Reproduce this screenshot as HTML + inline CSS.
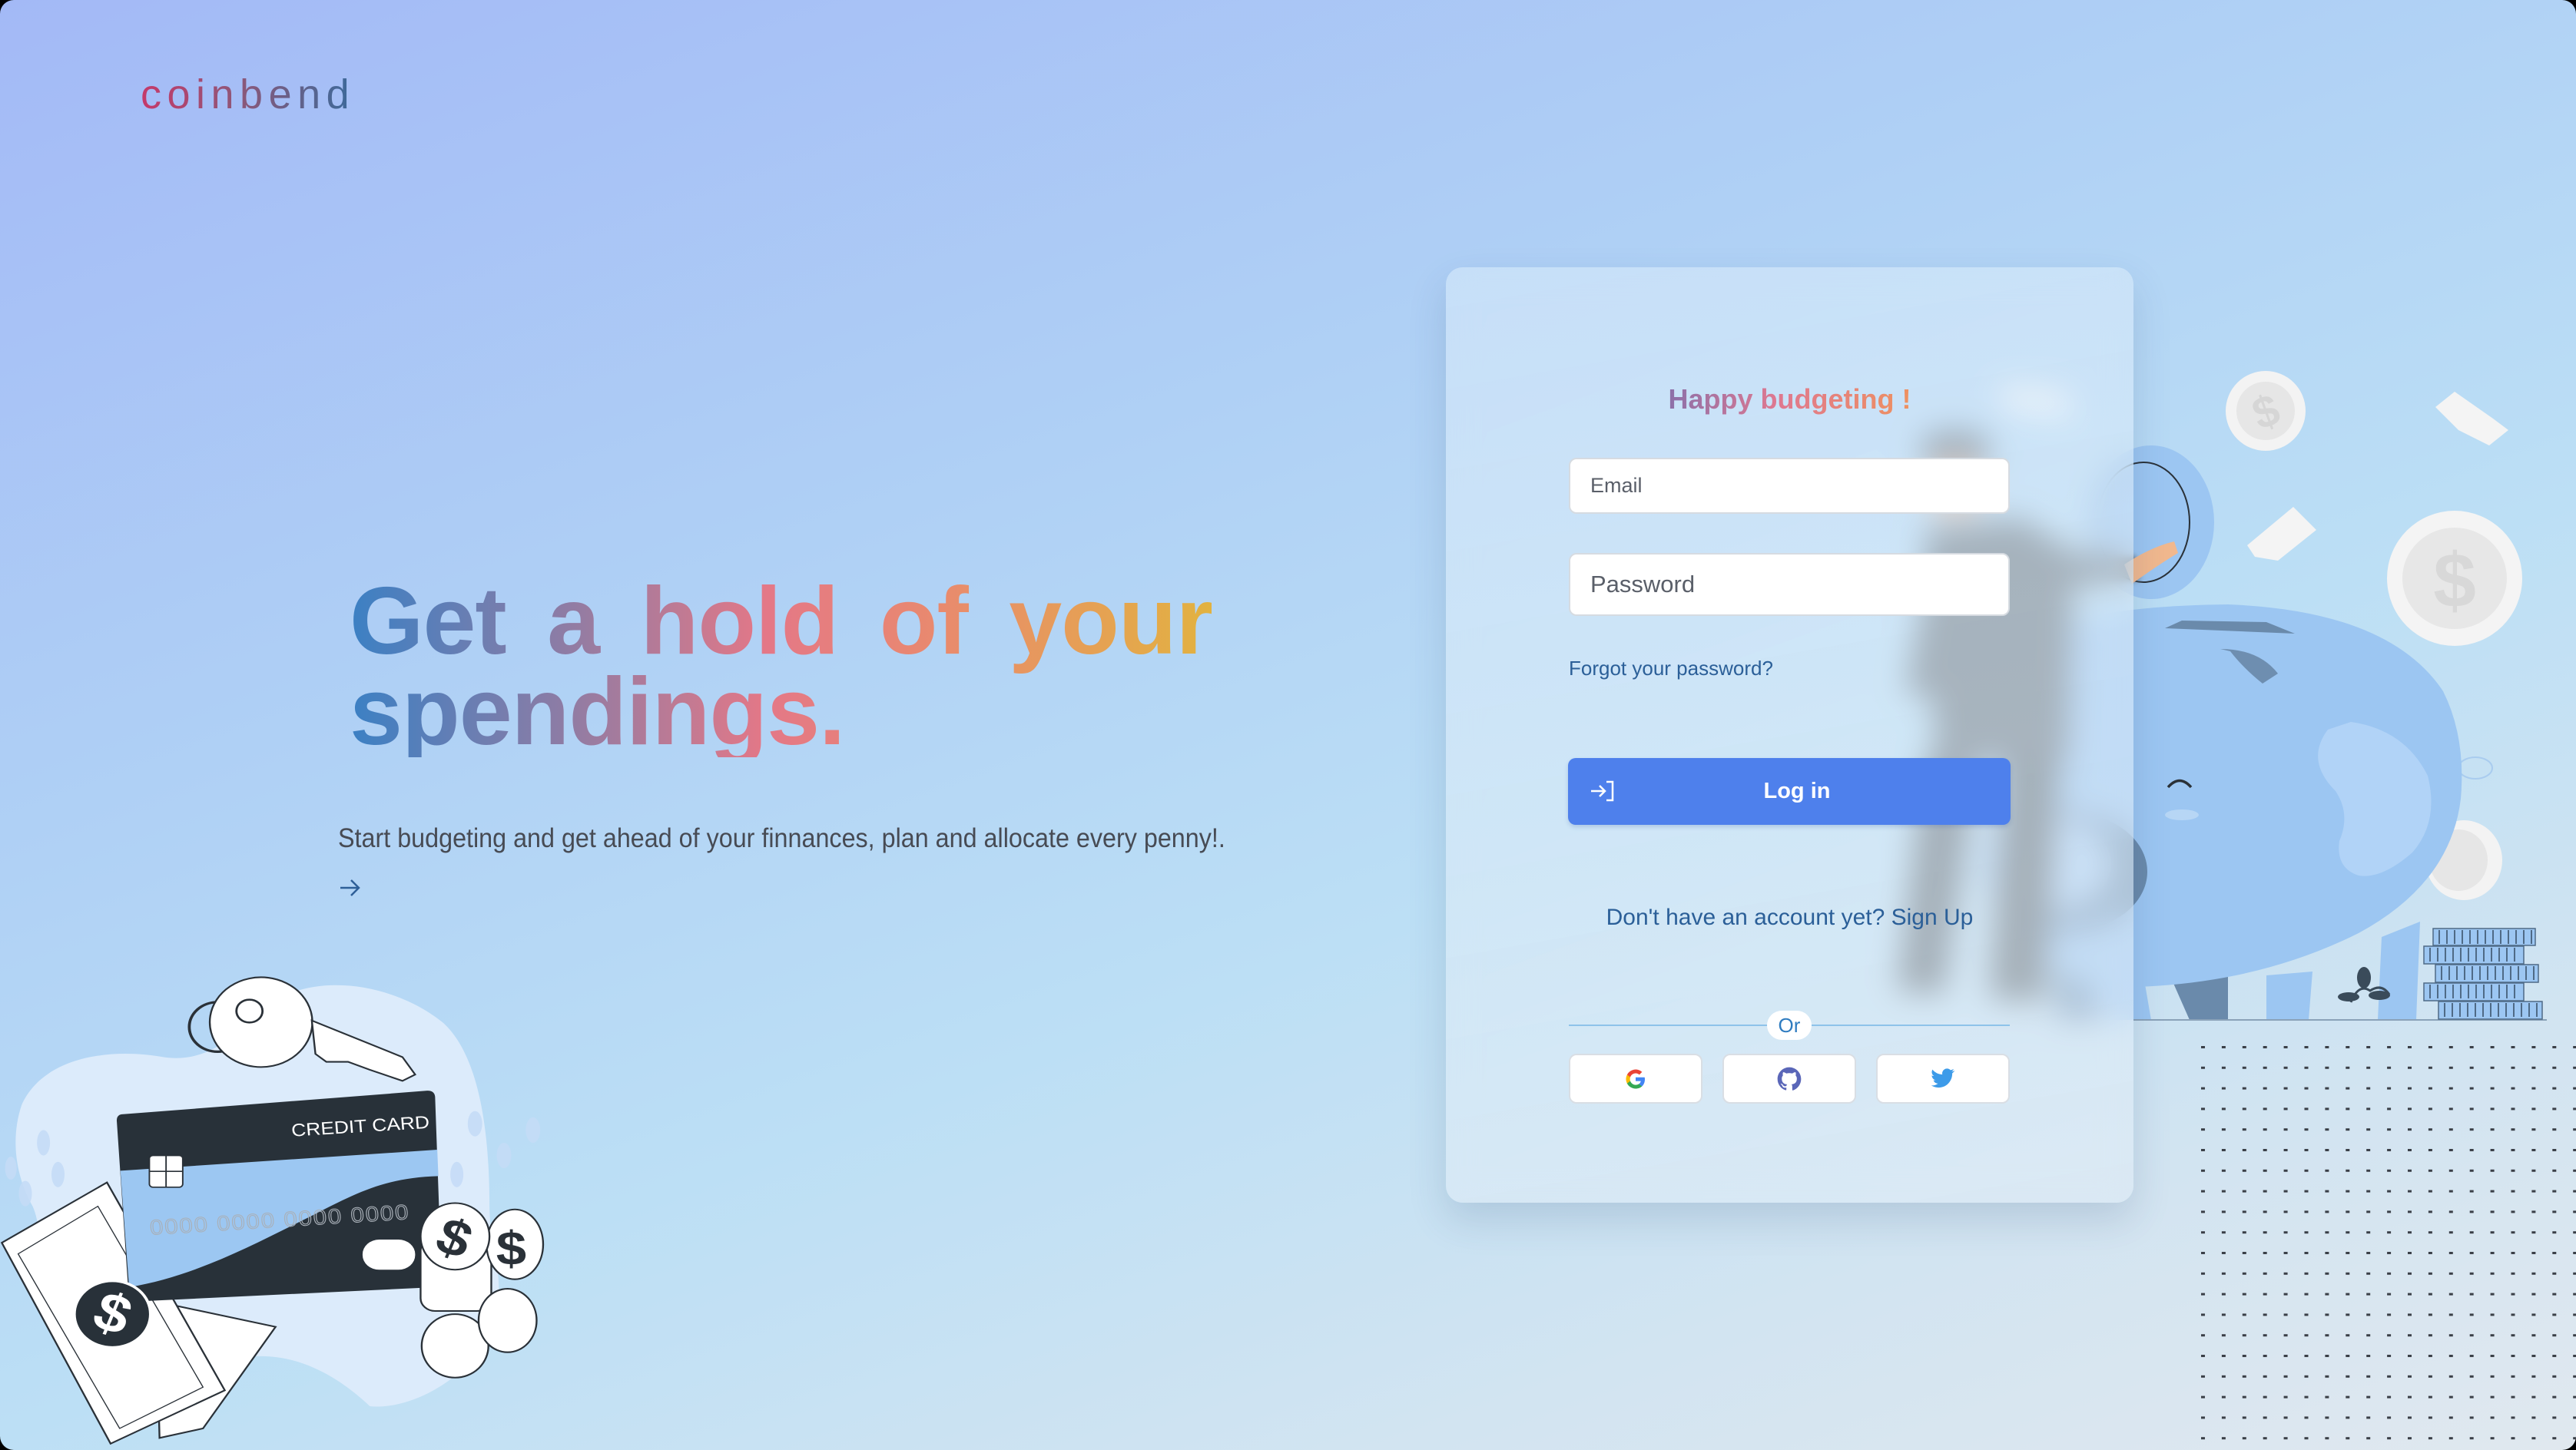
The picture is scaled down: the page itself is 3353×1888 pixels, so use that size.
<!DOCTYPE html>
<html><head><meta charset="utf-8">
<style>
html,body{margin:0;padding:0;background:#000;}
#root{position:relative;width:3353px;height:1888px;overflow:hidden;border-radius:18px;
background:linear-gradient(160deg,#a3b9f6 0%,#afd0f5 35%,#bcdff5 60%,#d2e4f1 82%,#e0e8ef 100%);
font-family:"Liberation Sans",sans-serif;}
.abs{position:absolute;}
.logo{left:183px;top:88px;font-size:54px;letter-spacing:7.5px;line-height:70px;
background:linear-gradient(90deg,#c5396a 0%,#8e5778 45%,#3a6a9b 100%);-webkit-background-clip:text;background-clip:text;color:transparent;}
.head{left:455px;top:750px;width:1130px;font-size:124px;line-height:118px;font-weight:bold;word-spacing:20px;letter-spacing:-1px;white-space:nowrap;
background:linear-gradient(90deg,#3b80c4 0%,#8f7ca4 25%,#e47887 48%,#e98a6e 68%,#e2b33f 100%);-webkit-background-clip:text;background-clip:text;color:transparent;}
.sub{left:440px;top:1074px;font-size:35px;line-height:35px;color:#474b54;white-space:nowrap;transform:scaleX(.923);transform-origin:0 0;}
.card{left:1882px;top:348px;width:895px;height:1218px;border-radius:22px;background:linear-gradient(170deg,rgba(218,236,250,.55),rgba(224,236,246,.6));
-webkit-backdrop-filter:blur(20px);backdrop-filter:blur(20px);box-shadow:0 22px 50px rgba(40,70,110,.16);}
.in{position:absolute;left:2042px;width:574px;background:#fff;border:2px solid #d6dbe1;border-radius:10px;box-sizing:border-box;color:#5a5f69;}
.btn{position:absolute;top:1372px;height:65px;width:174px;background:#fff;border:2px solid #d9dee4;border-radius:10px;box-sizing:border-box;}
.btn svg{position:absolute;left:50%;top:50%;transform:translate(-50%,-50%);}
</style></head><body>
<div id="root">

<div class="abs logo">coinbend</div>
<div class="abs head">Get a hold of your<br>spendings.</div>
<div class="abs sub">Start budgeting and get ahead of your finnances, plan and allocate every penny!.</div>
<svg class="abs" style="left:441px;top:1144px" width="30" height="24" viewBox="0 0 30 24"><path d="M2 12H26M16 2L26 12L16 22" stroke="#2e5f98" stroke-width="2.5" fill="none"/></svg>

<!-- left illustration -->
<svg class="abs" style="left:0;top:1240px" width="740" height="648" viewBox="0 0 1568 1568" preserveAspectRatio="none">
<path d="M60 480 C120 330 300 300 450 330 C560 350 640 280 760 150 C900 60 1100 110 1220 220 C1330 330 1350 600 1350 800 C1350 950 1420 1080 1330 1250 C1230 1390 1100 1440 1020 1430 C900 1300 750 1230 600 1300 C450 1360 280 1360 180 1230 C90 1100 130 900 90 800 C40 700 30 580 60 480Z" fill="#dcebfb"/>
<g fill="#c5dcf7" opacity=".9">
<ellipse cx="120" cy="600" rx="18" ry="40"/><ellipse cx="160" cy="700" rx="18" ry="40"/><ellipse cx="70" cy="760" rx="18" ry="40"/><ellipse cx="30" cy="680" rx="16" ry="36"/>
<ellipse cx="1310" cy="540" rx="20" ry="40"/><ellipse cx="1390" cy="640" rx="20" ry="40"/><ellipse cx="1470" cy="560" rx="20" ry="40"/><ellipse cx="1260" cy="700" rx="18" ry="40"/>
</g>
<circle cx="600" cy="235" r="78" fill="none" stroke="#2a3138" stroke-width="8"/>
<path d="M740 80 A125 125 0 1 1 700 360 A125 125 0 0 1 740 80Z" fill="#fff" stroke="#2a3138" stroke-width="5"/>
<path d="M860 215 L1110 330 L1145 385 L1110 405 L1020 370 L960 345 L900 345 L870 320 L860 215Z" fill="#fff" stroke="#2a3138" stroke-width="5"/>
<circle cx="688" cy="185" r="36" fill="#fff" stroke="#2a3138" stroke-width="6"/>
<path d="M430 1100 L760 1180 L560 1500 L440 1530Z" fill="#fff" stroke="#2a3138" stroke-width="5"/>
<path d="M5 915 L295 725 L620 1380 L305 1548Z" fill="#fff" stroke="#2a3138" stroke-width="5"/>
<path d="M50 950 L270 800 L560 1370 L330 1500Z" fill="none" stroke="#2a3138" stroke-width="3"/>
<path d="M340 510 Q322 510 322 530 L355 1085 Q357 1102 375 1100 L1200 1055 Q1220 1053 1218 1035 L1200 455 Q1198 435 1178 436Z" fill="#283139"/>
<path d="M332 688 L1206 622 L1209 705 C1060 710 980 760 860 830 C700 920 540 1020 356 1055Z" fill="#9cc7f2"/>
<text x="805" y="580" font-family="Liberation Sans,sans-serif" font-size="56" fill="#fff" transform="rotate(-4 805 580)">CREDIT CARD</text>
<rect x="412" y="640" width="92" height="100" rx="10" fill="#fff" stroke="#2a3138" stroke-width="4"/>
<path d="M412 690H504M458 640V740" stroke="#2a3138" stroke-width="4"/>
<text x="415" y="890" font-family="Liberation Sans,sans-serif" font-size="66" fill="none" stroke="#a9b0b8" stroke-width="2.5" letter-spacing="4" transform="rotate(-4 415 890)">0000  0000  0000  0000</text>
<rect x="1000" y="905" width="145" height="95" rx="46" fill="#fff"/>
<circle cx="310" cy="1140" r="105" fill="#283139" stroke="#fff" stroke-width="8"/>
<text x="310" y="1195" text-anchor="middle" font-family="Liberation Sans,sans-serif" font-weight="bold" font-size="170" fill="#fff" transform="rotate(20 310 1140)">$</text>
<g stroke="#2a3138" stroke-width="5" fill="#fff">
<rect x="1160" y="900" width="195" height="230" rx="40"/>
<ellipse cx="1420" cy="920" rx="78" ry="110"/>
<ellipse cx="1255" cy="895" rx="95" ry="105"/>
<ellipse cx="1255" cy="1240" rx="92" ry="100"/>
<ellipse cx="1400" cy="1160" rx="80" ry="100"/>
</g>
<text x="1255" y="955" text-anchor="middle" font-family="Liberation Sans,sans-serif" font-weight="bold" font-size="160" fill="#2a3138" transform="rotate(20 1255 895)">$</text>
<text x="1410" y="985" text-anchor="middle" font-family="Liberation Sans,sans-serif" font-weight="bold" font-size="150" fill="#2a3138">$</text>
</svg>

<!-- right illustration -->
<svg class="abs" style="left:2300px;top:400px" width="1053" height="1488" viewBox="2300 400 1053 1488">
<defs><pattern id="dots" x="2865" y="1362" width="26.9" height="26.8" patternUnits="userSpaceOnUse"><rect width="5" height="3" fill="#3a3f47"/></pattern>
<filter id="bl"><feGaussianBlur stdDeviation="4"/></filter></defs>
<rect x="2865" y="1360" width="488" height="528" fill="url(#dots)"/>
<g>
<ellipse cx="2949" cy="535" rx="52" ry="52" fill="#f3f3f3"/><ellipse cx="2949" cy="535" rx="38" ry="38" fill="#e6e6e6"/>
<text x="2949" y="556" text-anchor="middle" font-family="Liberation Sans,sans-serif" font-weight="bold" font-size="58" fill="#d6d6d6" transform="rotate(-20 2949 535)">$</text>
<ellipse cx="3195" cy="753" rx="88" ry="88" fill="#f4f4f4"/><ellipse cx="3195" cy="753" rx="68" ry="66" fill="#e7e7e7"/>
<text x="3195" y="790" text-anchor="middle" font-family="Liberation Sans,sans-serif" font-weight="bold" font-size="100" fill="#d8d8d8">$</text>
<ellipse cx="3207" cy="1120" rx="50" ry="52" fill="#f3f3f3"/><ellipse cx="3200" cy="1120" rx="38" ry="40" fill="#e6e6e6"/>
<path d="M3170 530 L3195 510 L3245 545 L3265 560 L3240 580 L3200 560Z" fill="#f4f4f4"/>
<path d="M2925 710 L2985 660 L3015 690 L2965 730 L2935 725Z" fill="#f4f4f4"/>
<ellipse cx="3222" cy="1000" rx="22" ry="14" fill="none" stroke="#a9ccef" stroke-width="2"/>
</g>
<ellipse cx="2800" cy="680" rx="82" ry="100" fill="#9cc6f2"/>
<ellipse cx="2790" cy="680" rx="60" ry="78" fill="#9cc6f2" stroke="#2a3138" stroke-width="2"/>
<path d="M2665 1240 L2680 1328 L2730 1328 L2735 1240Z" fill="#6a8aab"/>
<path d="M2820 1260 L2850 1328 L2900 1328 L2900 1250Z" fill="#6a8aab"/>
<path d="M2700 1260 L2740 1328 L2800 1328 L2790 1270Z" fill="#9cc6f2"/>
<path d="M2950 1270 L2950 1328 L3005 1328 L3010 1265Z" fill="#9cc6f2"/>
<path d="M3100 1220 L3095 1328 L3145 1328 L3150 1200Z" fill="#9cc6f2"/>
<path d="M2600 880 Q2620 790 2900 787 Q3110 795 3180 900 Q3210 960 3203 1040 Q3190 1150 3070 1215 Q2940 1280 2780 1285 Q2640 1280 2610 1200 Q2590 1100 2600 880Z" fill="#9cc6f2"/>
<path d="M3060 940 Q3130 950 3160 1010 Q3175 1070 3140 1110 Q3100 1145 3070 1140 Q3040 1130 3045 1095 Q3060 1060 3040 1030 Q3000 990 3030 950Z" fill="#b1d3f7"/>
<path d="M2818 818 L2987 825 L2950 810 L2840 808Z" fill="#6a8aab"/>
<path d="M2890 845 Q2940 845 2965 877 L2945 890 Q2920 870 2903 848Z" fill="#6e8eb0"/>
<ellipse cx="2690" cy="1135" rx="105" ry="78" fill="#6a8aab"/>
<ellipse cx="2660" cy="1125" rx="88" ry="62" fill="#aed0f5"/>
<path d="M2822 1025 Q2837 1008 2852 1025" stroke="#2a3138" stroke-width="3.5" fill="none"/>
<ellipse cx="2840" cy="1061" rx="22" ry="7" fill="#b7d6f5"/>
<path d="M3060 1305 Q3070 1280 3085 1290 Q3100 1280 3110 1295" stroke="#3a4b5a" stroke-width="3" fill="none"/>
<ellipse cx="3077" cy="1273" rx="9" ry="14" fill="#3a4b5a"/><ellipse cx="3057" cy="1298" rx="14" ry="6" fill="#3a4b5a"/><ellipse cx="3097" cy="1296" rx="14" ry="6" fill="#3a4b5a"/>
<g filter="url(#bl)">
<path d="M2500 575 Q2545 548 2590 575 L2585 605 L2505 605Z" fill="#4f575e"/>
<ellipse cx="2545" cy="635" rx="38" ry="40" fill="#e9b899"/>
<path d="M2505 690 L2630 675 L2700 720 L2690 990 L2520 990Z" fill="#5f686f"/>
<path d="M2620 715 L2780 725 L2785 755 L2625 770Z" fill="#5f686f"/>
<path d="M2520 700 L2480 900 L2515 910 L2550 720Z" fill="#5f686f"/>
<path d="M2505 985 L2470 1290 L2530 1295 L2575 990Z" fill="#545d63"/>
<path d="M2610 985 L2590 1300 L2660 1305 L2680 990Z" fill="#545d63"/>
<path d="M2600 500 L2690 510 L2700 545 L2610 535Z" fill="#fafafa"/>
</g>
<path d="M2765 735 Q2800 712 2830 705 L2835 720 Q2810 735 2775 760Z" fill="#f1b88e"/>
<line x1="2777" y1="1328" x2="3315" y2="1328" stroke="#8aa2b8" stroke-width="2"/>
<g fill="#9cc6f2" stroke="#4f6a86" stroke-width="1.5">
<rect x="3167" y="1209" width="133" height="22"/><rect x="3155" y="1232" width="130" height="23"/><rect x="3170" y="1256" width="134" height="23"/><rect x="3155" y="1280" width="130" height="23"/><rect x="3174" y="1304" width="135" height="23"/>
</g>
<g stroke="#4f6a86" stroke-width="2">
<path d="M3175 1211v18M3185 1211v18M3195 1211v18M3205 1211v18M3215 1211v18M3225 1211v18M3235 1211v18M3245 1211v18M3255 1211v18M3265 1211v18M3275 1211v18M3285 1211v18M3295 1211v18"/>
<path d="M3163 1234v18M3173 1234v18M3183 1234v18M3193 1234v18M3203 1234v18M3213 1234v18M3223 1234v18M3233 1234v18M3243 1234v18M3253 1234v18M3263 1234v18M3273 1234v18"/>
<path d="M3178 1258v18M3188 1258v18M3198 1258v18M3208 1258v18M3218 1258v18M3228 1258v18M3238 1258v18M3248 1258v18M3258 1258v18M3268 1258v18M3278 1258v18M3288 1258v18M3298 1258v18"/>
<path d="M3163 1282v18M3173 1282v18M3183 1282v18M3193 1282v18M3203 1282v18M3213 1282v18M3223 1282v18M3233 1282v18M3243 1282v18M3253 1282v18M3263 1282v18M3273 1282v18"/>
<path d="M3182 1306v18M3192 1306v18M3202 1306v18M3212 1306v18M3222 1306v18M3232 1306v18M3242 1306v18M3252 1306v18M3262 1306v18M3272 1306v18M3282 1306v18M3292 1306v18M3302 1306v18"/>
</g>
</svg>

<!-- card -->
<div class="abs card"></div>
<div class="abs" style="left:1882px;top:496px;width:895px;text-align:center;font-size:36px;font-weight:bold;line-height:48px;">
<span style="background:linear-gradient(90deg,#8c70a9 0%,#df7890 45%,#ee9160 100%);-webkit-background-clip:text;background-clip:text;color:transparent;">Happy budgeting !</span></div>
<div class="in" style="top:596px;height:73px;font-size:27px;line-height:69px;padding-left:26px;">Email</div>
<div class="in" style="top:720px;height:82px;font-size:31px;line-height:78px;padding-left:26px;">Password</div>
<div class="abs" style="left:2042px;top:854px;font-size:26px;line-height:32px;color:#2b5f98;">Forgot your password?</div>
<div class="abs" style="left:2041px;top:987px;width:576px;height:87px;border-radius:10px;background:#4e80ec;box-shadow:0 3px 6px rgba(40,80,160,.2);">
<svg style="position:absolute;left:28px;top:28px" width="34" height="30" viewBox="0 0 34 30"><path d="M2 15H20M13 8L20 15L13 22M22 3H30V27H22" stroke="#fff" stroke-width="2.5" fill="none"/></svg>
<div style="position:absolute;left:0;right:0;top:0;line-height:87px;text-align:center;color:#fff;font-size:29px;font-weight:bold;padding-left:20px;">Log in</div></div>
<div class="abs" style="left:1882px;top:1176px;width:895px;text-align:center;font-size:30px;line-height:38px;color:#2b5f98;">Don't have an account yet? Sign Up</div>
<div class="abs" style="left:2042px;top:1334px;width:574px;height:2px;background:#8ec3ea;"></div>
<div class="abs" style="left:2300px;top:1316px;width:58px;height:38px;border-radius:19px;background:#fff;text-align:center;line-height:38px;font-size:26px;color:#2f7cc0;">Or</div>
<div class="btn" style="left:2042px"><svg width="30" height="30" viewBox="0 0 24 24">
<path d="M21.6 12.2c0-.7-.1-1.4-.2-2H12v3.9h5.4a4.6 4.6 0 0 1-2 3v2.5h3.2c1.9-1.7 3-4.3 3-7.4z" fill="#4285F4"/>
<path d="M12 22c2.7 0 5-.9 6.6-2.4l-3.2-2.5c-.9.6-2 1-3.4 1-2.6 0-4.8-1.8-5.6-4.1H3.1v2.6A10 10 0 0 0 12 22z" fill="#34A853"/>
<path d="M6.4 14c-.2-.6-.3-1.3-.3-2s.1-1.4.3-2V7.4H3.1a10 10 0 0 0 0 9.2z" fill="#FBBC05"/>
<path d="M12 6c1.5 0 2.8.5 3.8 1.5l2.9-2.9A10 10 0 0 0 3.1 7.4L6.4 10C7.2 7.7 9.4 6 12 6z" fill="#EA4335"/></svg></div>
<div class="btn" style="left:2242px"><svg width="32" height="32" viewBox="0 0 24 24"><path d="M12 .5C5.65.5.5 5.65.5 12c0 5.08 3.29 9.39 7.86 10.91.58.1.79-.25.79-.56v-2c-3.2.7-3.87-1.37-3.87-1.37-.52-1.33-1.28-1.69-1.28-1.69-1.04-.71.08-.7.08-.7 1.15.08 1.76 1.18 1.76 1.18 1.03 1.76 2.69 1.25 3.35.96.1-.74.4-1.25.73-1.54-2.55-.29-5.24-1.28-5.24-5.690 0-1.26.45-2.28 1.18-3.09-.12-.29-.51-1.46.11-3.05 0 0 .97-.31 3.17 1.18a11 11 0 0 1 5.77 0c2.2-1.49 3.17-1.18 3.17-1.18.63 1.59.23 2.76.11 3.05.74.81 1.18 1.83 1.18 3.09 0 4.42-2.69 5.39-5.25 5.68.41.36.78 1.06.78 2.14v3.17c0 .31.21.67.8.56C20.21 21.39 23.5 17.08 23.5 12 23.5 5.65 18.35.5 12 .5z" fill="#5a66b8"/></svg></div>
<div class="btn" style="left:2442px"><svg width="32" height="28" viewBox="0 0 24 22"><path d="M23.6 2.6c-.9.4-1.8.6-2.8.8 1-.6 1.8-1.6 2.1-2.7-1 .6-2 1-3.1 1.2a4.9 4.9 0 0 0-8.4 4.5C7.3 6.2 3.7 4.3 1.3 1.3a4.9 4.9 0 0 0 1.5 6.6c-.8 0-1.6-.2-2.2-.6 0 2.4 1.7 4.4 3.9 4.8-.7.2-1.5.2-2.2.1.6 2 2.4 3.4 4.6 3.4A9.9 9.9 0 0 1 0 17.5a14 14 0 0 0 7.5 2.2c9 0 14-7.5 14-14v-.6c1-.7 1.8-1.6 2.5-2.5z" fill="#3d9be9"/></svg></div>

</div>
</body></html>
